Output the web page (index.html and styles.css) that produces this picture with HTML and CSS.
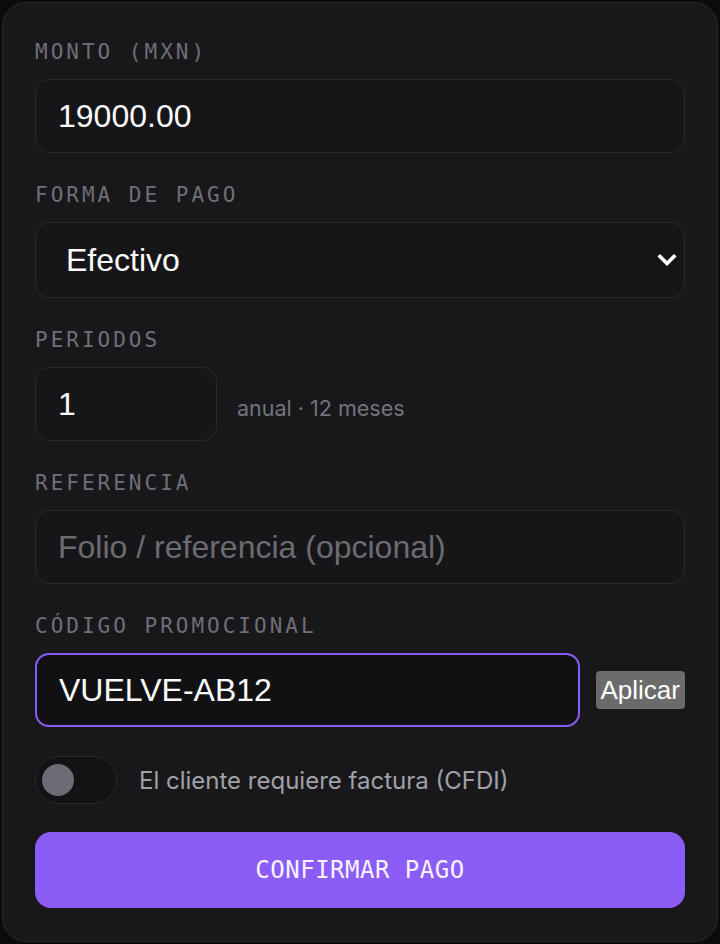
FILE: index.html
```html
<!DOCTYPE html>
<html lang="es">
<head>
    <meta charset="UTF-8">
    <meta name="viewport" content="width=device-width, initial-scale=1.0">
    <title>Registrar pago</title>
    <link rel="stylesheet" href="styles.css">
</head>
<body>
    <form class="card">
        <div class="field">
            <label class="label" for="monto">MONTO (MXN)</label>
            <input class="input" id="monto" type="text" value="19000.00">
        </div>

        <div class="field">
            <label class="label" for="forma">FORMA DE PAGO</label>
            <div class="select-wrap">
                <select class="input select" id="forma">
                    <option>Efectivo</option>
                    <option>Transferencia</option>
                    <option>Tarjeta</option>
                </select>
                <svg class="chevron" width="20" height="14" viewBox="0 0 20 14">
                    <path d="M3 3.5 L10 10.5 L17 3.5" fill="none" stroke="#ffffff" stroke-width="3.6" stroke-linecap="square"/>
                </svg>
            </div>
        </div>

        <div class="field">
            <label class="label" for="periodos">PERIODOS</label>
            <div class="row">
                <input class="input periods" id="periodos" type="text" value="1">
                <span class="hint">anual · 12 meses</span>
            </div>
        </div>

        <div class="field">
            <label class="label" for="referencia">REFERENCIA</label>
            <input class="input" id="referencia" type="text" placeholder="Folio / referencia (opcional)">
        </div>

        <div class="field">
            <label class="label" for="promo">CÓDIGO PROMOCIONAL</label>
            <div class="row">
                <input class="input promo" id="promo" type="text" value="VUELVE-AB12">
                <button class="apply" type="button">Aplicar</button>
            </div>
        </div>

        <div class="toggle-row">
            <span class="toggle"><span class="knob"></span></span>
            <span class="toggle-text">El cliente requiere factura (CFDI)</span>
        </div>

        <button class="confirm" type="button">CONFIRMAR PAGO</button>
    </form>
</body>
</html>
```

FILE: styles.css
```css
* {
    box-sizing: border-box;
}

body {
    margin: 0;
    background-color: #0b0b0d;
    font-family: "Inter", "Liberation Sans", sans-serif;
}

.card {
    margin: 2px;
    width: 716px;
    height: 940px;
    padding: 37px 32px 33px;
    background-color: #18181b;
    border: 1px solid #27272a;
    border-radius: 24px;
    display: flex;
    flex-direction: column;
}

.field {
    display: flex;
    flex-direction: column;
    margin-bottom: 30px;
}

.label {
    font-family: "DejaVu Sans Mono", "Liberation Mono", monospace;
    font-size: 21px;
    line-height: 24px;
    letter-spacing: 3px;
    color: #6f6f76;
    margin-bottom: 15px;
}

.input {
    height: 74px;
    width: 100%;
    padding: 0 22px;
    background-color: #161619;
    border: 1px solid #2a2a2e;
    border-radius: 14px;
    color: #fafafa;
    font-family: "Liberation Sans", Arial, sans-serif;
    font-size: 32px;
    outline: none;
}

.input::placeholder {
    color: #6b6b72;
}

.select-wrap {
    position: relative;
}

.select {
    height: 76px;
    padding-left: 30px;
    appearance: none;
    -webkit-appearance: none;
}

.chevron {
    position: absolute;
    right: 8px;
    top: 31px;
    pointer-events: none;
}

.row {
    display: flex;
    align-items: center;
}

.periods {
    width: 182px;
}

.hint {
    margin-left: 20px;
    margin-top: 7px;
    font-size: 21.5px;
    color: #74747b;
}

.promo {
    flex: 1;
    border: 2px solid #8b5cf6;
    background-color: #111114;
    padding-left: 22px;
}

.apply {
    margin-left: 16px;
    height: 38px;
    padding: 0 5px;
    background-color: #6b6b6b;
    color: #ffffff;
    border: none;
    border-radius: 4px;
    font-family: "Liberation Sans", Arial, sans-serif;
    font-size: 26px;
}

.toggle-row {
    display: flex;
    align-items: center;
    margin-top: -1px;
}

.toggle {
    width: 82px;
    height: 48px;
    border: 1px solid #27272a;
    border-radius: 24px;
    background-color: #131316;
    display: flex;
    align-items: center;
    padding-left: 6px;
}

.knob {
    width: 32px;
    height: 32px;
    border-radius: 50%;
    background-color: #6c6c74;
}

.toggle-text {
    margin-left: 22px;
    font-size: 24px;
    color: #a1a1a8;
}

.confirm {
    margin-top: 28px;
    height: 76px;
    background-color: #8b5cf6;
    border: none;
    border-radius: 16px;
    color: #f7f4ff;
    font-family: "DejaVu Sans Mono", "Liberation Mono", monospace;
    font-size: 24px;
    letter-spacing: 0.5px;
}
```
